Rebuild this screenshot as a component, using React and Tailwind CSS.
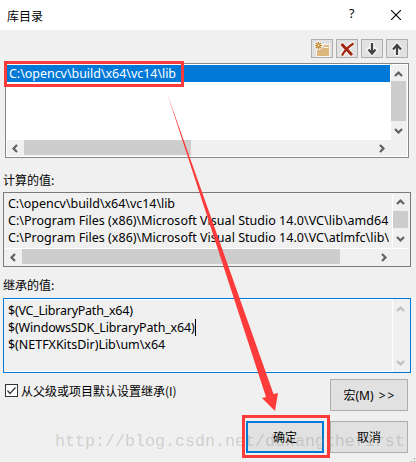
import React from "react";

const chevrons = {
  up: "M1 6 4.5 2.500 8 6",
  down: "M1 3 4.5 6.500 8 3",
  left: "M6 1 2.500 4.5 6 8",
  right: "M3 1 6.500 4.5 3 8",
};

function Chevron({ dir, muted }) {
  return (
    <svg width="9" height="9" viewBox="0 0 9 9" fill="none" stroke={muted ? "#bfbfbf" : "#606060"} strokeWidth="2.2">
      <path d={chevrons[dir]} />
    </svg>
  );
}

function ToolButton({ children }) {
  return (
    <button className="flex h-[19px] w-[22px] items-center justify-center border border-[#adadad] bg-[#e1e1e1]">
      {children}
    </button>
  );
}

function DialogButton({ children, primary }) {
  return (
    <button
      className={
        "flex h-8 w-[78px] items-center justify-center whitespace-pre bg-[#e1e1e1] " +
        (primary ? "border-2 border-[#0078d7]" : "border border-[#adadad]")
      }
    >
      {children}
    </button>
  );
}

export default function App() {
  return (
    <div className="relative flex h-[462px] w-[416px] flex-col overflow-hidden bg-[#f0f0f0] font-['Noto_Sans','Noto_Sans_CJK_SC',sans-serif] text-[12px] leading-[17px] text-black">
      <header className="flex h-[30px] shrink-0 items-center bg-white pl-[7px] pr-[15px]">
        <h1 className="flex-1 font-['Noto_Sans_CJK_SC',sans-serif]">库目录</h1>
        <span className="mr-[35px] w-[7px] text-[12.5px] leading-[14px] -mt-[2px]">?</span>
        <svg width="10" height="10" viewBox="0 0 10 10" stroke="#000" strokeWidth="1.1">
          <path d="M0 0 10 10M10 0 0 10" />
        </svg>
      </header>

      <div className="flex h-[33px] shrink-0 justify-end gap-[3px] pr-2 pt-[9px]">
        <ToolButton>
          <svg width="20" height="17" viewBox="0 0 20 17">
            <path d="M4 5h7l1-1h6v13H4z" fill="#f6f6f6" />
            <path d="M5 7h6l1-2h5v11H5z" fill="#dcb67a" />
            <path d="M11.500 7.500h5" stroke="#f6f6f6" />
            <circle cx="6.500" cy="5.500" r="4.300" fill="#f6f6f6" />
            <path d="M6.500 2v7M3 5.500h7M4 3l5 5M9 3l-5 5" stroke="#c27d1a" strokeWidth="1.200" />
            <circle cx="6.500" cy="5.500" r="1" fill="#f6f6f6" />
          </svg>
        </ToolButton>
        <ToolButton>
          <svg width="20" height="17" viewBox="0 0 20 17" fill="none">
            <path d="M4 3.500 15 15.500M17 3 Q9 8 4.500 15.500" stroke="#f6f6f6" strokeWidth="5" />
            <path d="M4.500 4 15 15" stroke="#a1260d" strokeWidth="3" />
            <path d="M16.500 3.500 Q9 8 5 15.500" stroke="#a1260d" strokeWidth="2.200" />
          </svg>
        </ToolButton>
        <ToolButton>
          <svg width="20" height="17" viewBox="0 0 20 17" fill="none">
            <path d="M10 2v12M5.500 8l4.500 5 4.500-5" stroke="#f6f6f6" strokeWidth="5" />
            <path d="M10 3v11M6.500 9.500l3.500 4 3.500-4" stroke="#424242" strokeWidth="2.200" />
          </svg>
        </ToolButton>
        <ToolButton>
          <svg width="20" height="17" viewBox="0 0 20 17" fill="none">
            <path d="M10 16V5M5.500 10l4.500-5 4.500 5" stroke="#f6f6f6" strokeWidth="5" />
            <path d="M10 15V5M6 9.500l4-4.500 4 4.500" stroke="#424242" strokeWidth="2.200" />
          </svg>
        </ToolButton>
      </div>

      <section className="ml-[5px] flex h-[95px] w-[404px] shrink-0 flex-col border border-[#828790] bg-white p-px">
        <div className="flex h-[75px]">
          <div className="w-[383px] overflow-hidden">
            <div className="h-[17px] whitespace-nowrap bg-[#0078d7] pl-[2px] text-[12.5px] leading-[17px] tracking-[-0.04px] text-white">
              C:\opencv\build\x64\vc14\lib
            </div>
          </div>
          <div className="ml-px flex w-[16px] flex-col bg-[#f0f0f0]">
            <div className="flex h-4 items-center pl-[3px] pt-[2px]"><Chevron dir="up" /></div>
            <div className="h-10 w-[15px] bg-[#cdcdcd]" />
            <div className="flex flex-1 items-center pl-[3px]"><Chevron dir="down" /></div>
          </div>
        </div>
        <div className="flex h-[16px] items-center bg-[#f0f0f0]">
          <div className="flex w-[17px] pl-[4px]"><Chevron dir="left" /></div>
          <div className="h-[15px] w-[167px] self-start bg-[#cdcdcd]" />
          <div className="flex flex-1 justify-end pr-[21px]"><Chevron dir="right" /></div>
        </div>
      </section>

      <h2 className="ml-[3px] mt-[13px] h-[17px] shrink-0 font-['Noto_Sans_CJK_SC',sans-serif]">计算的值:</h2>

      <section className="ml-[3px] mt-1 flex h-[75px] w-[408px] shrink-0 flex-col border border-[#7a7a7a] p-px">
        <div className="flex h-[55px] border-b border-white">
          <div className="w-[387px] overflow-hidden whitespace-pre pl-[3px] pr-[3px] pt-px text-[12.5px]">
            <div className="overflow-hidden">
              <p className="tracking-[-0.04px]">{"C:\\opencv\\build\\x64\\vc14\\lib"}</p>
              <p className="tracking-[0.02px]">{"C:\\Program Files (x86)\\Microsoft Visual Studio 14.0\\VC\\lib\\amd64"}</p>
              <p className="tracking-[0.02px]">{"C:\\Program Files (x86)\\Microsoft Visual Studio 14.0\\VC\\atlmfc\\lib\\"}</p>
            </div>
          </div>
          <div className="flex flex-1 flex-col border-l border-white pl-[3px]">
            <div className="flex h-[17px] items-center"><Chevron dir="up" /></div>
            <div className="-ml-[3px] h-[17px] w-[15px] bg-[#cdcdcd]" />
            <div className="flex flex-1 items-center pt-px"><Chevron dir="down" /></div>
          </div>
        </div>
        <div className="flex h-4 items-center">
          <div className="flex w-[17px] pl-[4px]"><Chevron dir="left" /></div>
          <div className="h-[15px] w-[318px] self-start bg-[#cdcdcd]" />
          <div className="flex flex-1 justify-end pr-[21px]"><Chevron dir="right" /></div>
        </div>
      </section>

      <h2 className="ml-[3px] mt-[9px] h-[17px] shrink-0 font-['Noto_Sans_CJK_SC',sans-serif]">继承的值:</h2>

      <section className="ml-[3px] mt-[5px] flex h-[75px] w-[408px] shrink-0 border border-[#0078d7]">
        <div className="w-[389px] whitespace-nowrap border-y border-r border-white pl-[4px] pt-[2px] text-[12.5px]">
          <p className="tracking-[-0.24px]">$(VC_LibraryPath_x64)</p>
          <p className="flex tracking-[-0.17px]">$(WindowsSDK_LibraryPath_x64)<span className="h-[17px] w-px bg-black" /></p>
          <p className="tracking-[-0.03px]">$(NETFXKitsDir)Lib\um\x64</p>
        </div>
        <div className="flex flex-col justify-between pb-[5px] pl-[3px] pt-[6px]">
          <Chevron dir="up" muted />
          <Chevron dir="down" muted />
        </div>
      </section>

      <div className="flex h-[48px] shrink-0 items-start justify-between pl-[5px] pr-2 pt-[6px]">
        <label className="flex items-center pt-[3px] font-['Noto_Sans_CJK_SC',sans-serif]">
          <span className="mr-[3px] flex h-[13px] w-[13px] items-center justify-center border border-[#333] bg-white">
            <svg width="11" height="11" viewBox="0 0 11 11" fill="none" stroke="#333" strokeWidth="1.200">
              <path d="M1.500 5.500 4 8.500 9.500 2.500" />
            </svg>
          </span>
          从父级或项目默认设置继承(I)
        </label>
        <DialogButton>宏(M) <span className="ml-[2px] mr-[-2px] tracking-[2px]">&gt;&gt;</span></DialogButton>
      </div>
      <footer className="flex shrink-0 justify-end gap-1.5 pr-2">
        <DialogButton primary>确定</DialogButton>
        <DialogButton>取消</DialogButton>
      </footer>

      <p className="absolute left-[55px] top-[431px] whitespace-nowrap font-['Liberation_Mono',monospace] text-[16.67px] leading-[22px] text-[#808078]/30">
        http://blog.csdn.net/duwangthefirst
      </p>
      <div className="absolute left-[4px] top-[61px] h-[26px] w-[180px] border-[3px] border-[#fd3b3b]" />
      <div className="absolute left-[242px] top-[415px] h-[43px] w-[88px] border-[3px] border-[#fd3b3b]" />
      <svg className="absolute left-0 top-0" width="416" height="462" viewBox="0 0 416 462">
        <path d="M167 93 273.500 394 278 393 275 411 262 398 266 397z" fill="#fd3b3b" />
        <path d="M414.500 458v1.500M411.500 461v1M414.500 461v1" stroke="#aaa" strokeWidth="1.500" />
      </svg>
    </div>
  );
}
